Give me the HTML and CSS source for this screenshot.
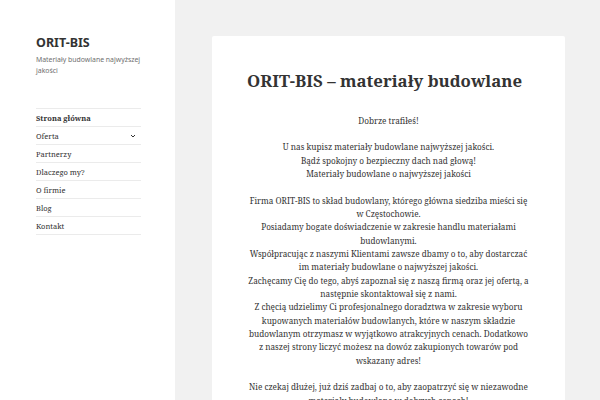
FILE: index.html
```html
<!DOCTYPE html>
<html lang="pl">
<head>
<meta charset="utf-8">
<title>ORIT-BIS – materiały budowlane</title>
<link rel="stylesheet" href="styles.css">
</head>
<body>
<div class="page">
  <aside class="sidebar">
    <div class="branding">
      <p class="site-title">ORIT-BIS</p>
      <p class="site-description">Materiały budowlane najwyższej jakości</p>
    </div>
    <nav class="menu">
      <ul>
        <li class="current"><span>Strona główna</span></li>
        <li><span>Oferta</span><svg class="chev" width="6" height="4" viewBox="0 0 6 4"><path d="M1 1 L3 3 L5 1" fill="none" stroke="#333" stroke-width="1"/></svg></li>
        <li><span>Partnerzy</span></li>
        <li><span>Dlaczego my?</span></li>
        <li><span>O firmie</span></li>
        <li><span>Blog</span></li>
        <li><span>Kontakt</span></li>
      </ul>
    </nav>
  </aside>
  <main class="content">
    <article class="card">
      <h1 class="entry-title">ORIT-BIS – materiały budowlane</h1>
      <div class="entry-content">
        <p>Dobrze trafiłeś!</p>
        <p>U nas kupisz materiały budowlane najwyższej jakości.<br>Bądź spokojny o bezpieczny dach nad głową!<br>Materiały budowlane o najwyższej jakości</p>
        <p>Firma ORIT-BIS to skład budowlany, którego główna siedziba mieści się w Częstochowie.<br>Posiadamy bogate doświadczenie w zakresie handlu materiałami budowlanymi.<br>Współpracując z naszymi Klientami zawsze dbamy o to, aby dostarczać im materiały budowlane o najwyższej jakości.<br>Zachęcamy Cię do tego, abyś zapoznał się z naszą firmą oraz jej ofertą, a następnie skontaktował się z nami.<br>Z chęcią udzielimy Ci profesjonalnego doradztwa w zakresie wyboru kupowanych materiałów budowlanych, które w naszym składzie budowlanym otrzymasz w wyjątkowo atrakcyjnych cenach. Dodatkowo z naszej strony liczyć możesz na dowóz zakupionych towarów pod wskazany adres!</p>
        <p>Nie czekaj dłużej, już dziś zadbaj o to, aby zaopatrzyć się w niezawodne materiały budowlane w dobrych cenach!</p>
      </div>
    </article>
  </main>
</div>
</body>
</html>
```
FILE: styles.css
```css
html, body {
  margin: 0;
  padding: 0;
}
body {
  background: #f1f1f1;
  color: #333;
  font-family: "Noto Serif", "DejaVu Serif", serif;
  overflow: hidden;
  height: 400px;
}
.page {
  display: flex;
  height: 400px;
}
.sidebar {
  width: 175px;
  flex: none;
  background: #fff;
  padding: 0 34px 0 36px;
  box-sizing: border-box;
}
.branding {
  padding-top: 35px;
}
.site-title {
  margin: 0;
  font-family: "Noto Sans", sans-serif;
  font-weight: bold;
  font-size: 12.5px;
  line-height: 16px;
  color: #333;
}
.site-description {
  margin: 3px 0 0;
  font-family: "Noto Sans", sans-serif;
  font-size: 6.9px;
  line-height: 11px;
  color: #707070;
}
.menu {
  margin-top: 32px;
}
.menu ul {
  list-style: none;
  margin: 0;
  padding: 0;
  border-top: 1px solid #ebebeb;
}
.menu li {
  display: flex;
  align-items: center;
  justify-content: space-between;
  height: 17px;
  border-bottom: 1px solid #ebebeb;
  font-size: 7.5px;
  color: #333;
}
.menu li.current {
  font-weight: bold;
}
.chev {
  margin-right: 5px;
}
.content {
  flex: 1;
  padding: 36px 0 0 37px;
}
.card {
  width: 353px;
  background: #fff;
  border-radius: 2px;
  padding: 34px 35px 0;
  box-sizing: border-box;
  min-height: 380px;
}
.entry-title {
  margin: 0 0 21.5px;
  font-size: 16.8px;
  line-height: 22px;
  font-weight: bold;
  color: #333;
  white-space: nowrap;
}
.entry-content {
  font-size: 8.2px;
  line-height: 13.35px;
  text-align: center;
}
.entry-content p {
  margin: 0 0 13.35px;
}
```
